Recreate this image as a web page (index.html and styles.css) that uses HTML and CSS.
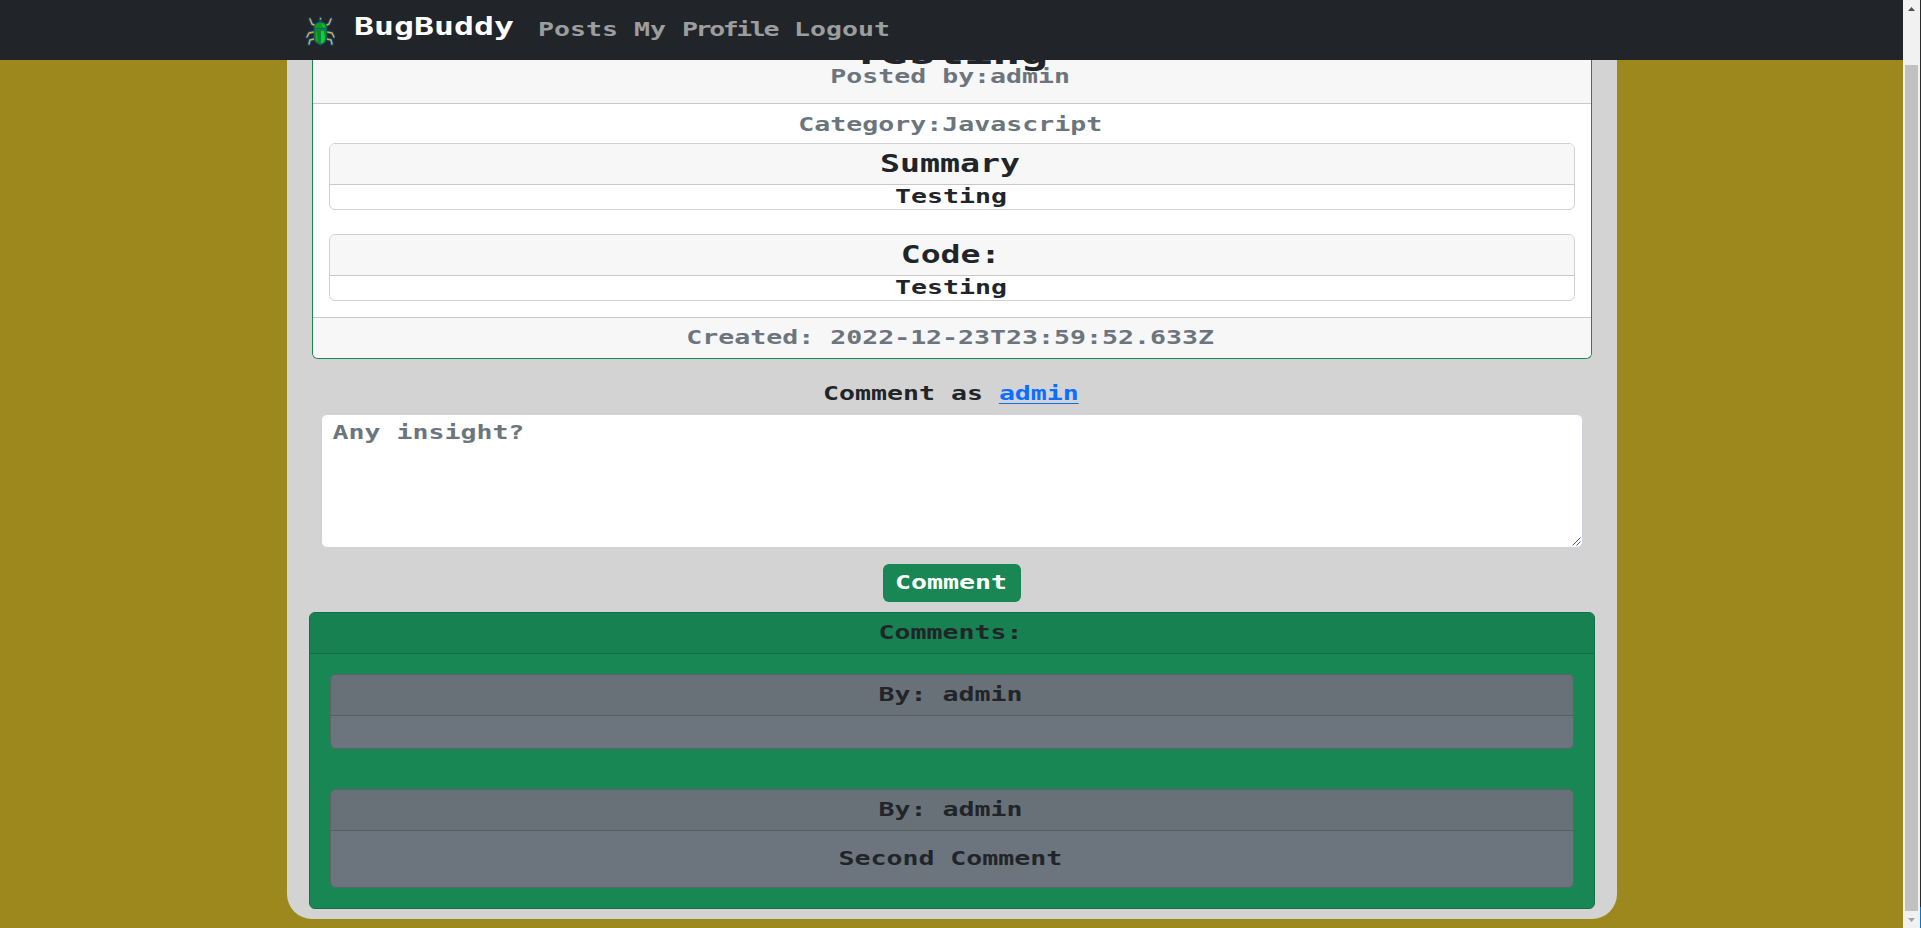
FILE: index.html
```html
<!DOCTYPE html>
<html lang="en">
<head>
<meta charset="utf-8">
<title>BugBuddy</title>
<link rel="stylesheet" href="styles.css">
</head>
<body>
<div class="page">
  <nav class="navbar">
    <svg class="logo" width="30" height="32" viewBox="0 0 30 32" fill="none" stroke-linecap="round" stroke-linejoin="round">
      <path stroke="#0d4277" stroke-width="3.600" d="M5 4l2 5 4 2M26 4l-2 5-4 2M9 17l-5 1-2 4M22 17l5 1 2 4M9 24l-4 1-1 4M22 24l4 1 1 4M15.500 3v5"/>
      <path stroke="#dca944" stroke-width="1.500" d="M5 4l2 5 4 2M26 4l-2 5-4 2M9 17l-5 1-2 4M22 17l5 1 2 4M9 24l-4 1-1 4M22 24l4 1 1 4M15.500 3.500v.5"/>
      <path d="M9 12.500q1-5.500 6.500-5.500T22 12.500V14H9z" fill="#0b9c19" stroke="#174f6f"/>
      <path d="M9.500 14h12q1.500 8-1 13l-5 3-5-3q-2.500-5-1-13z" fill="#098c20" stroke="#16566b"/>
      <path d="M16 16h3l1 8-2 4h-2zM16 8l4 3-1 2z" fill="#08d531"/>
      <path d="M11 17v8l2 3-1-11z" fill="#16ac16"/>
      <path d="M10 14.500h11M15.300 15v13" stroke="#1b7b60"/>
    </svg>
    <a class="brand"><span class="wide">BugBuddy</span></a>
    <a class="link posts"><span class="wide">Posts</span></a>
    <a class="link profile"><span class="wide">My</span> <span class="wide tight">Profile</span></a>
    <a class="link logout"><span class="wide">Logout</span></a>
  </nav>
  <main class="container">
    <section class="card post">
      <div class="card-header post-header">
        <h3><span class="wide">Testing</span></h3>
        <div class="muted"><span class="wide">Posted by:admin</span></div>
      </div>
      <div class="post-body">
        <div class="muted category"><span class="wide">Category:Javascript</span></div>
        <div class="card">
          <div class="card-header"><h5><span class="wide">Summary</span></h5></div>
          <div><span class="wide">Testing</span></div>
        </div>
        <div class="card">
          <div class="card-header"><h5><span class="wide">Code:</span></h5></div>
          <div><span class="wide">Testing</span></div>
        </div>
      </div>
      <div class="card-footer muted"><span class="wide">Created: 2022-12-23T23:59:52.633Z</span></div>
    </section>
    <div class="form">
      <div class="label"><span class="wide">Comment as <a class="user">admin</a></span></div>
      <div class="field"><span class="wide">Any insight?</span>
        <svg class="grip" width="9" height="9" viewBox="0 0 9 9" stroke="#555" stroke-width="1" fill="none"><path d="M.5 8.500l8-8M4.500 8.500l4-4"/></svg>
      </div>
      <button class="btn"><span class="wide">Comment</span></button>
    </div>
    <section class="card comments">
      <div class="card-header"><span class="wide">Comments:</span></div>
      <div class="comments-body">
        <div class="card comment">
          <div class="card-header"><span class="wide">By: admin</span></div>
          <div class="comment-text"></div>
        </div>
        <div class="card comment">
          <div class="card-header"><span class="wide">By: admin</span></div>
          <div class="comment-text"><span class="wide">Second Comment</span></div>
        </div>
      </div>
    </section>
  </main>
</div>
<aside class="scrollbar">
  <svg width="17" height="17" viewBox="0 0 17 17"><path d="M5 11l3.500-4 3.500 4z" fill="#505050"/></svg>
  <div class="thumb"></div>
  <svg width="17" height="17" viewBox="0 0 17 17"><path d="M5 7l3.500 4 3.500-4z" fill="#a3a3a3"/></svg>
</aside>
<div class="edge"></div>
</body>
</html>
```
FILE: styles.css
```css
* { box-sizing: border-box; }

body {
  margin: 0;
  height: 928px;
  display: flex;
  overflow: hidden;
  background: #9d881d;
  color: #212529;
  font: bold 19.2px/24px "DejaVu Sans Mono", monospace;
}

h3, h5 { margin: 0; }

.page { width: 1903px; height: 928px; overflow: hidden; }

.wide {
  display: inline-block;
  height: 24px;
  vertical-align: top;
  white-space: nowrap;
  transform: translateX(-1.5px) scaleX(1.384);
}

.navbar {
  position: relative;
  z-index: 1;
  height: 60px;
  padding-left: 305px;
  display: flex;
  align-items: flex-start;
  background: #212529;
}
.navbar .wide { transform: scaleX(1.384); transform-origin: left; }
.logo { margin-top: 15px; }
.brand {
  width: 160px;
  margin: 15px 24px 0 19px;
  font-size: 24px;
  color: #fff;
}
.link { margin: 18px 16px 0 0; color: #9b9d9f; }
.posts { width: 80px; }
.profile { width: 144px; display: flex; justify-content: space-between; }
.profile .tight { width: 96px; letter-spacing: -1.75px; }
.logout { width: 96px; }

.container {
  width: 1330px;
  height: 883px;
  margin: -24px 0 0 287px;
  padding: 0 22px;
  background: #d3d3d3;
  border-radius: 0 0 25px 25px;
  text-align: center;
}

.card {
  background: #fff;
  border: 1px solid #d1d1d1;
  border-radius: 6px;
}
.card-header {
  height: 41px;
  padding: 8px;
  background: #f7f7f7;
  border-bottom: 1px solid #c8c8c8;
  border-radius: 5px 5px 0 0;
}
.card-footer {
  height: 41px;
  padding: 8px;
  background: #f7f7f7;
  border-top: 1px solid #c8c8c8;
  border-radius: 0 0 5px 5px;
}
.muted { color: #6c757d; }

h5 { font-size: 24px; line-height: 24px; }
h3 { font-size: 33.6px; line-height: 34px; height: 34px; margin-bottom: -5px; }
h3 .wide { height: 34px; }

.post { margin: 0 3px; border-color: #198754; border-top: 0; }
.post-header { height: 68px; padding: 0; border-radius: 0; }
.post-body { padding: 9px 16px 16px; display: grid; gap: 24px; }
.category { margin-bottom: -18px; }

.form {
  padding: 23px 12px 0;
  height: 253px;
}
.field {
  position: relative;
  height: 134px;
  margin: 8px 0 16px;
  padding: 6px 12px;
  text-align: left;
  background: #fff;
  border: 1px solid #ced4da;
  border-radius: 6px;
  color: #6c757d;
}
.field .wide { transform-origin: left; }
.grip { position: absolute; right: 1px; bottom: 1px; }
.user { color: #0d6efd; text-decoration: underline; text-decoration-thickness: 1px; text-underline-offset: 3px; }

.btn {
  display: block;
  width: 138px;
  height: 38px;
  margin: 0 auto;
  padding: 0;
  border: 0;
  border-radius: 6px;
  background: #198754;
  color: #fff;
  font: inherit;
}

.comments { background: #198754; border-color: #166f47; }
.comments > .card-header { background: #188151; border-color: #146c43; }
.comments-body { padding: 20px; display: grid; gap: 40px; }
.comment { background: #6c757d; border-color: #5c646b; }
.comment .card-header { background: #697178; border-color: #565e65; }
.comment-text { padding: 16px; }

.scrollbar {
  width: 17px;
  height: 928px;
  display: flex;
  flex-direction: column;
  justify-content: space-between;
  background: #f1f1f1;
}
.thumb { width: 13px; height: 847px; margin: 48px 0 0 2px; background: #c1c1c1; }
.edge { width: 1px; height: 928px; background: linear-gradient(#2b2b2b 907px, #0078d7 907px); }
```
